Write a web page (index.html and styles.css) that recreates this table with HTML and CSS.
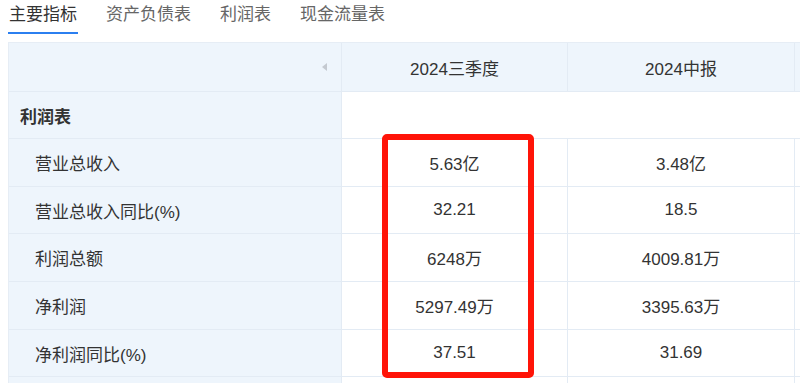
FILE: index.html
```html
<!DOCTYPE html>
<html lang="zh">
<head>
<meta charset="utf-8">
<link rel="stylesheet" href="styles.css">
</head>
<body>
<div class="page">
  <nav class="tabs">
    <span class="tab active">主要指标</span>
    <span class="tab">资产负债表</span>
    <span class="tab">利润表</span>
    <span class="tab">现金流量表</span>
  </nav>
  <div class="table-wrap">
    <div class="grid">
      <div class="cell head label-head"><span class="arrow"></span></div>
      <div class="cell head">2024三季度</div>
      <div class="cell head">2024中报</div>
      <div class="cell head"></div>

      <div class="cell label section">利润表</div>
      <div class="cell blank"></div>

      <div class="cell label">营业总收入</div>
      <div class="cell val">5.63亿</div>
      <div class="cell val">3.48亿</div>
      <div class="cell val"></div>

      <div class="cell label">营业总收入同比(%)</div>
      <div class="cell val">32.21</div>
      <div class="cell val">18.5</div>
      <div class="cell val"></div>

      <div class="cell label">利润总额</div>
      <div class="cell val">6248万</div>
      <div class="cell val">4009.81万</div>
      <div class="cell val"></div>

      <div class="cell label">净利润</div>
      <div class="cell val">5297.49万</div>
      <div class="cell val">3395.63万</div>
      <div class="cell val"></div>

      <div class="cell label">净利润同比(%)</div>
      <div class="cell val">37.51</div>
      <div class="cell val">31.69</div>
      <div class="cell val"></div>

      <div class="cell label"></div>
      <div class="cell val"></div>
      <div class="cell val"></div>
      <div class="cell val"></div>
    </div>
    <div class="highlight"></div>
  </div>
</div>
</body>
</html>
```

FILE: styles.css
```css
html, body {
  margin: 0;
  padding: 0;
  background: #ffffff;
  overflow: hidden;
}

.page {
  width: 800px;
  height: 383px;
  overflow: hidden;
  font-family: "Liberation Sans", "Noto Sans CJK SC", sans-serif;
  color: #333333;
}

.tabs {
  display: flex;
  gap: 27px;
  padding: 0 0 0 8px;
  height: 43px;
  box-sizing: border-box;
}

.tab {
  font-size: 17px;
  line-height: 17px;
  padding: 6px 1px 0;
  height: 26px;
  color: #666666;
  box-sizing: content-box;
  border-bottom: 2px solid transparent;
  margin-bottom: auto;
}

.tab.active {
  color: #333333;
  border-bottom-color: #2b7ff0;
}

.table-wrap {
  position: relative;
  margin-left: 8px;
}

.grid {
  display: grid;
  grid-template-columns: 333px 226px 227px 227px;
  grid-template-rows: 49px 47px 48px 47px 48px 48px 47px 48px;
  border-top: 1px solid #e6edf5;
  border-left: 1px solid #e6edf5;
  width: max-content;
  margin-top: -1px;
}

.cell {
  display: flex;
  align-items: center;
  justify-content: center;
  border-right: 1px solid #e3ebf4;
  border-bottom: 1px solid #e3ebf4;
  font-size: 17px;
  color: #333333;
  box-sizing: border-box;
}

.head {
  background: #eef5fc;
}

.label-head {
  justify-content: flex-end;
  padding-right: 14px;
}

.arrow {
  width: 0;
  height: 0;
  border-top: 4px solid transparent;
  border-bottom: 4px solid transparent;
  border-right: 5px solid #c4c9d0;
}

.label {
  background: #eef5fc;
  justify-content: flex-start;
  padding-left: 26px;
}

.label.section {
  padding-left: 11px;
  font-weight: bold;
}

.blank {
  grid-column: span 3;
  background: #ffffff;
}

.val {
  background: #ffffff;
}

.highlight {
  position: absolute;
  left: 374px;
  top: 92px;
  width: 152px;
  height: 244px;
  border: 6px solid #ff1408;
  border-radius: 5px;
  box-sizing: border-box;
}
```
